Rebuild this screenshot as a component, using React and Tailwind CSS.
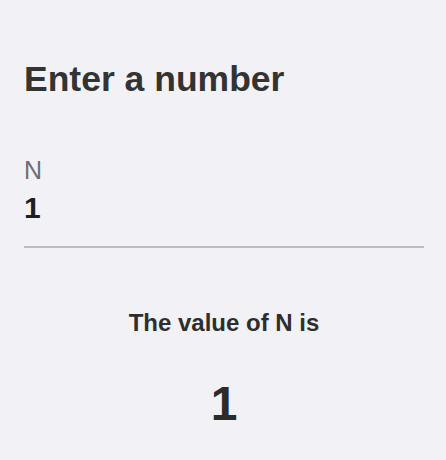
export default function App() {
  return (
    <div
      className="w-[446px] h-[460px] bg-[#f2f2f6] pl-6 pr-[22px] pt-[59px] flex flex-col"
      style={{ fontFamily: '"Liberation Sans", Arial, sans-serif' }}
    >
      <h1 className="text-[35.5px] leading-[40px] font-bold text-[#333333]">Enter a number</h1>
      <div className="mt-[56px] border-b-2 border-[#bdbdc1] pb-[20px]">
        <div className="text-[25px] leading-[30px] text-[#6e6e6e]">N</div>
        <div className="mt-[5px] text-[30px] leading-[36px] font-bold text-[#1f1f1f]">1</div>
      </div>
      <div className="mt-[61px] text-center text-[24px] leading-[28px] font-bold text-[#2e2e2e]">
        The value of N is
      </div>
      <div className="mt-[39px] text-center text-[48px] leading-[56px] font-bold text-[#2b2b2b]">1</div>
    </div>
  );
}
